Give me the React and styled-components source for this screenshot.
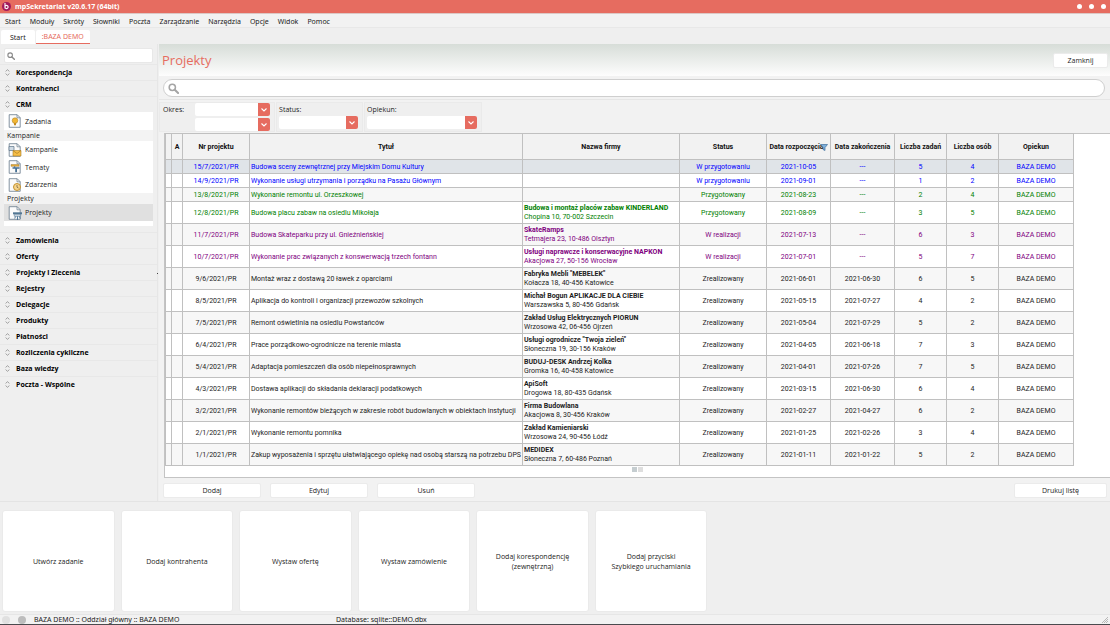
import React from 'react'
import styled, { createGlobalStyle, css } from 'styled-components'

const accent = '#e66c60'
const chromeFont = '"Noto Sans", "Open Sans", sans-serif'

const GlobalStyle = createGlobalStyle`
  * { box-sizing: border-box; }
  html, body, #root { height: 100%; }
  body {
    margin: 0;
    background: #efefef;
    color: #1c1c1c;
    font-family: "Open Sans", "Noto Sans", sans-serif;
    font-size: 7px;
    line-height: 9px;
  }
  button, input, select {
    font: inherit;
    color: inherit;
    border: 0;
    margin: 0;
    padding: 0;
  }
`

const Window = styled.div`
  display: flex;
  flex-direction: column;
  min-height: 100%;
  border-bottom: 1px solid #4a4a4e;
`

const TitleBar = styled.header`
  display: flex;
  align-items: center;
  gap: 4px;
  height: 14px;
  padding: 0 4px 1px 2px;
  background: ${accent};
  border-bottom: 1px solid #dcc8c5;
  color: #fff;
  font-family: ${chromeFont};
  font-weight: 700;
`

const WindowDots = styled.div`
  display: flex;
  gap: 7px;
  margin-left: auto;
`

const Dot = styled.button`
  width: 5px;
  height: 5px;
  border-radius: 50%;
  background: #fff;
`

const MenuBar = styled.nav`
  display: flex;
  gap: 9px;
  height: 14px;
  align-items: center;
  padding: 1px 5px 0;
  background: #f2f2f2;
  border-bottom: 1px solid #e8e8e8;
  font-family: ${chromeFont};
`

const MenuLink = styled.a`
  color: inherit;
  text-decoration: none;
`

const Tabs = styled.div`
  display: flex;
  gap: 1px;
  height: 16px;
  padding: 2px 1px 0;
  font-family: ${chromeFont};
`

const Tab = styled.button`
  height: 14px;
  padding: 0 ${p => (p.$active ? '6px' : '9px')};
  background: #fff;
  border-radius: 2px 2px 0 0;
  ${p => p.$active && css`
    color: ${accent};
    border-bottom: 1px solid ${accent};
  `}
`

const Body = styled.div`
  display: grid;
  grid-template-columns: 158px minmax(0, 1fr);
  border-bottom: 1px solid #e4e4e4;
`

const Sidebar = styled.aside`
  position: relative;
  border-right: 1px solid #e6e6e6;
  padding-top: 4px;

  /* splitter grip */
  &::after {
    content: '';
    position: absolute;
    top: 50%;
    right: -1px;
    width: 1px;
    height: 1px;
    background: #444;
  }
`

const SideSearch = styled.label`
  display: flex;
  align-items: center;
  gap: 4px;
  height: 15px;
  margin: 0 4px 1px;
  padding-left: 2px;
  background: #fff;
  border: 1px solid #e8e8e8;
  border-radius: 2px;
`

const PlainInput = styled.input`
  flex: 1;
  min-width: 0;
  height: 10px;
  background: transparent;
  outline: none;
`

const Section = styled.button`
  display: flex;
  align-items: center;
  gap: 6px;
  width: 100%;
  height: 16px;
  padding-left: 5px;
  background: #efefef;
  border-top: 1px solid #e8e8e8;
  color: #000;
  font-weight: 700;
`

const Panel = styled.div`
  margin: 0 4px 6px;
  padding-bottom: 5px;
  background: #fff;
`

const PanelTitle = styled.div`
  height: 11px;
  padding-left: 3px;
  background: #f3f3f3;
  line-height: 11px;
`

const PanelItem = styled.a`
  display: flex;
  align-items: center;
  gap: 3px;
  height: ${p => (p.$tall ? '18px' : '17px')};
  padding-left: 4px;
  background: ${p => (p.$active ? '#e0e0e0' : '#fff')};
  color: inherit;
  text-decoration: none;
`

const Main = styled.main`
  margin-left: 1px;
  background: #f2f2f2;
`

const Heading = styled.div`
  display: flex;
  align-items: center;
  justify-content: space-between;
  height: 32px;
  padding: 0 2px 0 3px;
  background: linear-gradient(#d7ddd8, #fdfdfd);
`

const Title = styled.h1`
  margin: 0;
  color: ${accent};
  font-size: 13px;
  line-height: 18px;
  font-weight: 400;
`

const Button = styled.button`
  width: ${p => p.$width || '98px'};
  height: 15px;
  background: #fff;
  border: 1px solid #ebebeb;
  border-radius: 2px;
`

const SearchBox = styled.label`
  display: flex;
  align-items: center;
  gap: 4px;
  height: 18px;
  margin: 3px 5px 2px 4px;
  padding: 0 4px;
  background: #fff;
  border: 1px solid #cfcfcf;
  border-radius: 9px;
`

const Filters = styled.div`
  display: flex;
  gap: 1px;
  height: 34px;
  padding: 2px 0 1px;
  border-top: 1px solid #e6e6e6;
`

const Filter = styled.fieldset`
  display: flex;
  flex-direction: ${p => (p.$row ? 'row' : 'column')};
  gap: ${p => (p.$row ? '11px' : '0')};
  min-width: 0;
  margin: 0;
  padding: 0 4px 0 ${p => (p.$row ? '3px' : '2px')};
  background: #efefef;
  border: 1px solid #eaeaea;
  line-height: 13px;
`

const SelectStack = styled.div`
  display: flex;
  flex-direction: column;
  gap: 2px;
`

const SelectWrap = styled.div`
  display: grid;
  grid-template-columns: 1fr 12px;
  width: ${p => p.$width};
  height: 13px;
  border-radius: 2px;
  overflow: hidden;
  background: #fff;

  select {
    grid-area: 1 / 1 / 2 / 3;
    appearance: none;
    background: transparent;
    outline: none;
  }
  svg {
    grid-area: 1 / 2 / 2 / 3;
    width: 12px;
    height: 13px;
    background: ${accent};
    pointer-events: none;
  }
`

const TableArea = styled.div`
  margin-left: 5px;
  padding-right: 38px;
  background: #fff;
  border: 1px solid #c4c4c4;
  border-right: 0;
  height: 345px;
`

const Table = styled.table`
  width: 100%;
  margin-top: -1px;
  table-layout: fixed;
  border-collapse: collapse;
  font-family: Roboto, "Open Sans", sans-serif;
  line-height: 9px;

  th, td {
    padding: 1px 0 0;
    border: 1px solid #c0c0c0;
    text-align: center;
    white-space: nowrap;
    overflow: hidden;
  }
  th {
    height: 26px;
    background: #f2f2f2;
    color: #111;
  }
  .text { text-align: left; padding-left: 1px; }
`

const tones = { new: '#0000ff', ready: '#008000', work: '#800080', done: '#1c1c1c' }

const Row = styled.tr`
  height: ${p => (p.$short ? '14px' : '22px')};
  color: ${p => tones[p.$tone]};
  background: ${p => (p.$selected ? '#e0e4e8' : p.$odd ? '#fff' : '#f7f7f7')};
`

const SortHead = styled.span`
  display: flex;
  align-items: center;
  justify-content: center;
  svg { flex: none; margin-left: -4px; }
`

const Pager = styled.div`
  display: flex;
  justify-content: center;
  gap: 1px;
  padding: 1px 0 0 38px;
  span { width: 5px; height: 5px; background: #c5cdd0; }
  span + span { background: #dedede; }
`

const Actions = styled.div`
  display: flex;
  gap: 9px;
  height: 23px;
  padding: 5px 3px 0 4px;
  button:last-child { margin-left: auto; }
`

const QuickBar = styled.div`
  display: grid;
  grid-template-columns: repeat(6, 1fr);
  gap: 6px;
  width: 64%;
  flex: 1;
  padding: 8px 3px 2px 2px;
`

const QuickButton = styled.button`
  padding-top: 2px;
  background: #fff;
  border: 1px solid #eaeaea;
  border-radius: 3px;
  line-height: 10px;
  white-space: pre-line;
`

const StatusBar = styled.footer`
  display: flex;
  align-items: center;
  height: 10px;
  padding: 0 2px;
  background: #f2f2f2;
  border-top: 1px solid #e6e6e6;
  font-family: ${chromeFont};
  svg { margin-left: auto; }
`

const Lamp = styled.i`
  width: 8px;
  height: 8px;
  margin-right: 8px;
  border-radius: 50%;
  background: ${p => p.$color};
`

const StatusText = styled.span`
  flex: ${p => (p.$wide ? '0 0 302px' : 'none')};
`

const Magnifier = ({ size, color = '#a5a5a5' }) => (
  <svg width={size} height={size} viewBox="0 0 12 12" fill="none" stroke={color}>
    <circle cx="4.7" cy="4.7" r="3.4" strokeWidth="1.7" />
    <path d="M7.4 7.4L11 11" strokeWidth="2.2" strokeLinecap="round" />
  </svg>
)

const Updown = () => (
  <svg width="5" height="7" viewBox="0 0 5 7" fill="none" stroke="#8c8c8c" strokeWidth=".8">
    <path d="M.6 2.4L2.5.7l1.9 1.7M.6 4.6l1.9 1.7 1.9-1.7" />
  </svg>
)

const Logo = () => (
  <svg width="9" height="9" viewBox="0 0 18 18">
    <circle cx="9" cy="9" r="9" fill="#a3195b" />
    <path d="M6 2v11M6 9a3.2 3.2 0 1 1 0 2" fill="none" stroke="#fff" strokeWidth="2.2" />
  </svg>
)

const badges = {
  task: <><circle cx="7" cy="6.6" r="2.8" fill="#f2b632" stroke="#a67c28" strokeWidth=".5" /><path d="M6 9h2v2.3H6z" fill="#c48b22" /></>,
  mail: <><path d="M1 3.5h5v4H1z" fill="#cfdbe5" stroke="#5c7488" strokeWidth=".7" /><path d="M5 7.5h8v5.5H5z" fill="#f6bd45" stroke="#a67c28" strokeWidth=".6" /><path d="M5 7.5l4 3 4-3" fill="none" stroke="#a67c28" strokeWidth=".7" /></>,
  topic: <><path d="M3 4.5h8v1.8H3z" fill="#e9ad36" stroke="#8a6a2a" strokeWidth=".4" /><path d="M4.5 7.2h7v1.6h-7zM7.2 8.8h1.8v3.4H7.2zM6.2 6.2h1v1h-1z" fill="#456f93" /></>,
  event: <><circle cx="9" cy="9" r="3.5" fill="#f7d58b" stroke="#c2912e" strokeWidth="1" /><path d="M9 7v2.2l1.5.8" fill="none" stroke="#68563a" strokeWidth=".7" /></>,
  project: <><path d="M5 6.3h9v2H5z" fill="#537794" /><path d="M6.3 8.3h6.4v2H6.3z" fill="#d6dfe6" stroke="#537794" strokeWidth=".6" /><path d="M9.5 10.3V14M7.5 10.5l-.8 2M11.5 10.5l.8 2" stroke="#456f93" strokeWidth=".9" /></>,
}

const DocIcon = ({ kind }) => (
  <svg width="14" height="14" viewBox="0 0 14 14">
    <path d="M1.2.7h8l3 3v9.6h-11z" fill="#fbfbfb" stroke="#66788a" strokeWidth=".8" />
    <path d="M9 .8v3h3.1" fill="none" stroke="#66788a" strokeWidth=".7" />
    {badges[kind]}
  </svg>
)

const Funnel = () => (
  <svg width="8" height="7" viewBox="0 0 8 7">
    <path d="M.5.5h7L5 3.6v2.9l-2-1V3.6z" fill="#7db0dc" stroke="#3f6f9c" strokeWidth=".7" />
  </svg>
)

const Dropdown = ({ label, width }) => (
  <SelectWrap $width={width}>
    <select aria-label={label} />
    <svg viewBox="0 0 12 13" fill="none" stroke="#fff" strokeWidth="1.1">
      <path d="M3.5 5.5L6 8l2.5-2.5" />
    </svg>
  </SelectWrap>
)

const SectionButton = ({ children }) => (
  <Section><Updown />{children}</Section>
)

const menu = ['Start', 'Moduły', 'Skróty', 'Słowniki', 'Poczta', 'Zarządzanie', 'Narzędzia', 'Opcje', 'Widok', 'Pomoc']

const sections = ['Zamówienia', 'Oferty', 'Projekty i Zlecenia', 'Rejestry', 'Delegacje', 'Produkty',
  'Płatności', 'Rozliczenia cykliczne', 'Baza wiedzy', 'Poczta - Wspólne']

const columns = [6, 11, 67, 273, 157, 87, 64, 64, 52, 52, 75]

const rows = [
  ['15/7/2021/PR', 'Budowa sceny zewnętrznej przy Miejskim Domu Kultury', '', '', 'W przygotowaniu', '2021-10-05', '---', 5, 4, 'new'],
  ['14/9/2021/PR', 'Wykonanie usługi utrzymania i porządku na Pasażu Głównym', '', '', 'W przygotowaniu', '2021-09-01', '---', 1, 2, 'new'],
  ['13/8/2021/PR', 'Wykonanie remontu ul. Orzeszkowej', '', '', 'Przygotowany', '2021-08-23', '---', 2, 4, 'ready'],
  ['12/8/2021/PR', 'Budowa placu zabaw na osiedlu Mikołaja', 'Budowa i montaż placów zabaw KINDERLAND', 'Chopina 10, 70-002 Szczecin', 'Przygotowany', '2021-08-09', '---', 3, 5, 'ready'],
  ['11/7/2021/PR', 'Budowa Skateparku przy ul. Gnieźnieńskiej', 'SkateRamps', 'Tetmajera 23, 10-486 Olsztyn', 'W realizacji', '2021-07-13', '---', 6, 3, 'work'],
  ['10/7/2021/PR', 'Wykonanie prac związanych z konswerwacją trzech fontann', 'Usługi naprawcze i konserwacyjne NAPKON', 'Akacjowa 27, 50-156 Wrocław', 'W realizacji', '2021-07-01', '---', 5, 7, 'work'],
  ['9/6/2021/PR', 'Montaż wraz z dostawą 20 ławek z oparciami', 'Fabryka Mebli "MEBELEK"', 'Kołacza 18, 40-456 Katowice', 'Zrealizowany', '2021-06-01', '2021-06-30', 6, 5, 'done'],
  ['8/5/2021/PR', 'Aplikacja do kontroli i organizacji przewozów szkolnych', 'Michał Bogun APLIKACJE DLA CIEBIE', 'Warszawska 5, 80-456 Gdańsk', 'Zrealizowany', '2021-05-15', '2021-07-27', 4, 2, 'done'],
  ['7/5/2021/PR', 'Remont oświetlnia na osiedlu Powstańców', 'Zakład Usług Elektrycznych PIORUN', 'Wrzosowa 42, 06-456 Ojrzeń', 'Zrealizowany', '2021-05-04', '2021-07-29', 5, 2, 'done'],
  ['6/4/2021/PR', 'Prace porządkowo-ogrodnicze na terenie miasta', 'Usługi ogrodnicze "Twoja zieleń"', 'Słoneczna 19, 30-156 Kraków', 'Zrealizowany', '2021-04-05', '2021-06-18', 7, 3, 'done'],
  ['5/4/2021/PR', 'Adaptacja pomieszczeń dla osób niepełnosprawnych', 'BUDUJ-DESK Andrzej Kolka', 'Gromka 16, 40-458 Katowice', 'Zrealizowany', '2021-04-01', '2021-07-26', 7, 5, 'done'],
  ['4/3/2021/PR', 'Dostawa aplikacji do składania deklaracji podatkowych', 'ApiSoft', 'Drogowa 18, 80-435 Gdańsk', 'Zrealizowany', '2021-03-15', '2021-06-30', 6, 4, 'done'],
  ['3/2/2021/PR', 'Wykonanie remontów bieżących w zakresie robót budowlanych w obiektach instytucji', 'Firma Budowlana', 'Akacjowa 8, 30-456 Kraków', 'Zrealizowany', '2021-02-27', '2021-04-27', 6, 2, 'done'],
  ['2/1/2021/PR', 'Wykonanie remontu pomnika', 'Zakład Kamieniarski', 'Wrzosowa 24, 90-456 Łódź', 'Zrealizowany', '2021-01-25', '2021-02-26', 3, 4, 'done'],
  ['1/1/2021/PR', 'Zakup wyposażenia i sprzętu ułatwiającego opiekę nad osobą starszą na potrzebu DPS', 'MEDIDEX', 'Słoneczna 7, 60-486 Poznań', 'Zrealizowany', '2021-01-11', '2021-01-22', 5, 2, 'done'],
]

const quick = ['Utwórz zadanie', 'Dodaj kontrahenta', 'Wystaw ofertę', 'Wystaw zamówienie',
  'Dodaj korespondencję\n(zewnętrzną)', 'Dodaj przyciski\nSzybkiego uruchamiania']

const SideNav = () => (
  <Sidebar>
    <SideSearch>
      <Magnifier size={8} color="#8a8a8a" />
      <PlainInput aria-label="Szukaj w menu" />
    </SideSearch>
    <SectionButton>Korespondencja</SectionButton>
    <SectionButton>Kontrahenci</SectionButton>
    <SectionButton>CRM</SectionButton>
    <Panel>
      <PanelItem href="#zadania" $tall><DocIcon kind="task" />Zadania</PanelItem>
      <PanelTitle>Kampanie</PanelTitle>
      <PanelItem href="#kampanie"><DocIcon kind="mail" />Kampanie</PanelItem>
      <PanelItem href="#tematy" $tall><DocIcon kind="topic" />Tematy</PanelItem>
      <PanelItem href="#zdarzenia"><DocIcon kind="event" />Zdarzenia</PanelItem>
      <PanelTitle>Projekty</PanelTitle>
      <PanelItem href="#projekty" $active><DocIcon kind="project" />Projekty</PanelItem>
    </Panel>
    {sections.map(name => <SectionButton key={name}>{name}</SectionButton>)}
  </Sidebar>
)

const Projects = () => (
  <Table>
    <colgroup>
      {columns.map((w, i) => <col key={i} width={w} />)}
    </colgroup>
    <thead>
      <tr>
        <th />
        <th>A</th>
        <th>Nr projektu</th>
        <th>Tytuł</th>
        <th>Nazwa firmy</th>
        <th>Status</th>
        <th><SortHead>Data rozpoczęcia<Funnel /></SortHead></th>
        <th>Data zakończenia</th>
        <th>Liczba zadań</th>
        <th>Liczba osób</th>
        <th>Opiekun</th>
      </tr>
    </thead>
    <tbody>
      {rows.map(([nr, title, firm, address, status, from, to, tasks, people, tone], i) => (
        <Row key={nr} $tone={tone} $short={!firm} $selected={i === 0} $odd={i % 2 === 1}>
          <td />
          <td />
          <td>{nr}</td>
          <td className="text">{title}</td>
          <td className="text">{firm && <><b>{firm}</b><br />{address}</>}</td>
          <td>{status}</td>
          <td>{from}</td>
          <td>{to}</td>
          <td>{tasks}</td>
          <td>{people}</td>
          <td>BAZA DEMO</td>
        </Row>
      ))}
    </tbody>
  </Table>
)

const App = () => (
  <>
    <GlobalStyle />
    <Window>
      <TitleBar>
        <Logo />
        mpSekretariat v20.6.17 (64bit)
        <WindowDots>
          <Dot aria-label="Minimalizuj" />
          <Dot aria-label="Maksymalizuj" />
          <Dot aria-label="Zamknij okno" />
        </WindowDots>
      </TitleBar>
      <MenuBar>
        {menu.map(name => <MenuLink key={name} href="#menu">{name}</MenuLink>)}
      </MenuBar>
      <Tabs>
        <Tab>Start</Tab>
        <Tab $active>:BAZA DEMO</Tab>
      </Tabs>
      <Body>
        <SideNav />
        <Main>
          <Heading>
            <Title>Projekty</Title>
            <Button $width="55px">Zamknij</Button>
          </Heading>
          <SearchBox>
            <Magnifier size={11} />
            <PlainInput aria-label="Szukaj projektu" />
          </SearchBox>
          <Filters>
            <Filter $row>
              Okres:
              <SelectStack>
                <Dropdown label="Okres od" width="75px" />
                <Dropdown label="Okres do" width="75px" />
              </SelectStack>
            </Filter>
            <Filter>
              Status:
              <Dropdown label="Status" width="79px" />
            </Filter>
            <Filter>
              Opiekun:
              <Dropdown label="Opiekun" width="110px" />
            </Filter>
          </Filters>
          <TableArea>
            <Projects />
            <Pager><span /><span /></Pager>
          </TableArea>
          <Actions>
            <Button>Dodaj</Button>
            <Button>Edytuj</Button>
            <Button>Usuń</Button>
            <Button $width="93px">Drukuj listę</Button>
          </Actions>
        </Main>
      </Body>
      <QuickBar>
        {quick.map(name => <QuickButton key={name}>{name}</QuickButton>)}
      </QuickBar>
      <StatusBar>
        <Lamp $color="#e0e0e0" />
        <Lamp $color="#bdbdbd" />
        <StatusText $wide>BAZA DEMO :: Oddział główny :: BAZA DEMO</StatusText>
        <StatusText>Database: sqlite::DEMO.dbx</StatusText>
        <svg width="6" height="6" viewBox="0 0 6 6" stroke="#a8a8a8" strokeWidth=".8">
          <path d="M0 6l6-6M2 6l4-4M4 6l2-2" />
        </svg>
      </StatusBar>
    </Window>
  </>
)

export default App
